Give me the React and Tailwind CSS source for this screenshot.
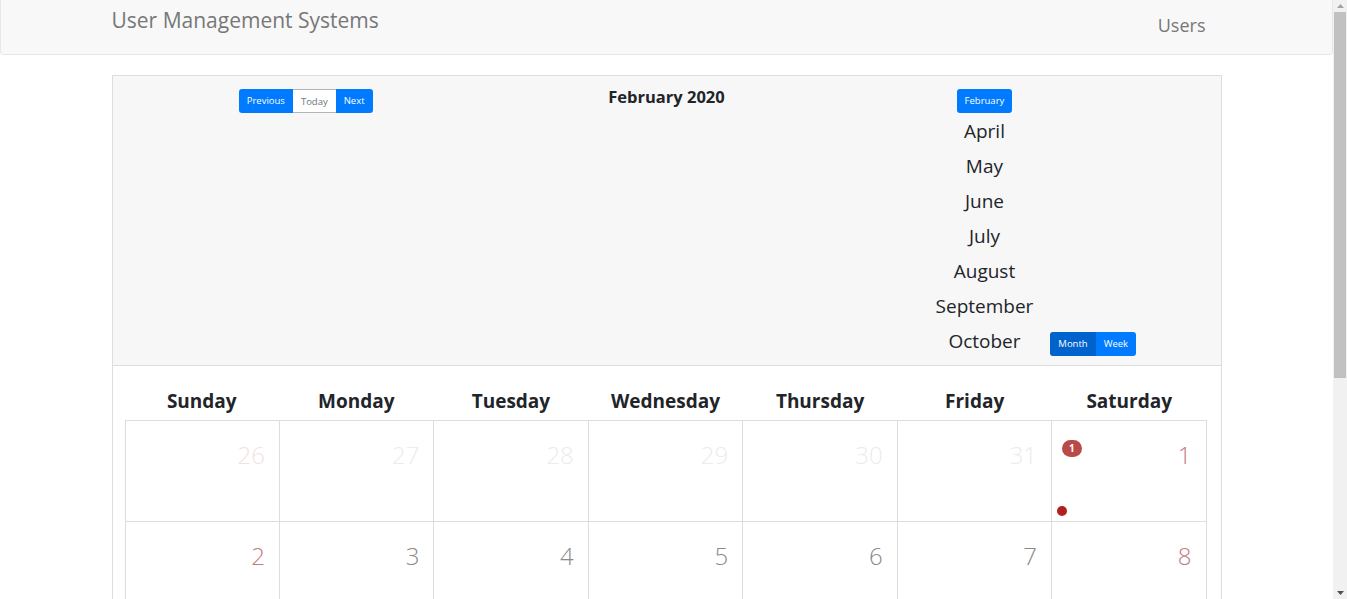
import React from "react";

const days = ["Sunday", "Monday", "Tuesday", "Wednesday", "Thursday", "Friday", "Saturday"];
const months = ["April", "May", "June", "July", "August", "September", "October"];

// build Feb 2020 grid (starts Sun Jan 26)
const weeks = [];
for (let w = 0; w < 5; w++) {
    const row = [];
    for (let d = 0; d < 7; d++) {
        const idx = w * 7 + d;
        if (idx < 6) row.push({ n: 26 + idx, other: true, dow: d });
        else row.push({ n: idx - 5, other: false, dow: d });
    }
    weeks.push(row);
}

const numColor = (c) => {
    if (c.other) return c.dow === 0 ? "text-[#f1e3e3]" : "text-[#ececec]";
    if (c.dow === 0 || c.dow === 6) return "text-[#c27c80]";
    return "text-[#8a8a8a]";
};

const App = () => {
    return (
        <div className="flex h-[599px] overflow-hidden bg-white font-['Open_Sans','Noto_Sans',sans-serif] text-[#212529]">
            <div className="w-[1333px] shrink-0">
                {/* navbar */}
                <div className="h-[55px] bg-[#f8f8f8] border border-t-0 border-[#e7e7e7] rounded-b-[4px]">
                    <div className="w-[1110px] mx-auto flex justify-between">
                        <div className="pt-[6px] text-[21px] leading-[28px] text-[#777]">User Management Systems</div>
                        <div className="pt-[12px] pr-[16px] text-[18px] leading-[26px] text-[#777]">Users</div>
                    </div>
                </div>

                {/* calendar card */}
                <div className="w-[1110px] mx-auto mt-[20px] border border-[#ddd]">
                    <div className="bg-[#f7f7f7] border-b border-[#ddd] grid grid-cols-3 pt-[13px] pb-[6px]">
                        <div className="flex justify-center pl-[17px] items-start">
                            <div className="flex text-[9.5px] leading-[24px] rounded-[3px] overflow-hidden">
                                <button className="bg-[#007bff] text-white px-[8px] h-[24px]">Previous</button>
                                <button className="bg-white text-[#6c757d] px-[8px] h-[24px] border-y border-[#adb5bd]">Today</button>
                                <button className="bg-[#007bff] text-white px-[8px] h-[24px]">Next</button>
                            </div>
                        </div>
                        <div className="flex justify-center">
                            <div className="text-[16.5px] font-bold leading-[18px] -mt-[1px]">February 2020</div>
                        </div>
                        <div className="flex justify-center items-end gap-[17px]">
                            <div className="flex flex-col items-center">
                                <button className="bg-[#007bff] text-white text-[9.5px] h-[24px] px-[8px] rounded-[3px]">February</button>
                                <div className="pt-[1px]">
                                    {months.map((m) => (
                                        <div key={m} className="text-[19px] leading-[35px] text-center">
                                            {m}
                                        </div>
                                    ))}
                                </div>
                            </div>
                            <div className="flex text-[9.5px] rounded-[3px] overflow-hidden mb-[3px]">
                                <button className="bg-[#0062cc] text-white px-[8px] h-[24px]">Month</button>
                                <button className="bg-[#007bff] text-white px-[8px] h-[24px]">Week</button>
                            </div>
                        </div>
                    </div>

                    <div className="bg-white pl-[12px] pr-[14px] pt-[20px]">
                        <div className="grid grid-cols-7 pb-[4px]">
                            {days.map((d) => (
                                <div key={d} className="text-center text-[19px] font-bold leading-[30px]">
                                    {d}
                                </div>
                            ))}
                        </div>
                        <div className="border-t border-l border-[#ddd]">
                            {weeks.map((row, i) => (
                                <div key={i} className="grid grid-cols-7">
                                    {row.map((c, j) => (
                                        <div key={j} className="relative h-[101px] border-r border-b border-[#ddd]">
                                            <div className={`text-right pr-[14px] pt-[19px] text-[24px] font-light leading-[30px] ${numColor(c)}`}>
                                                {c.n}
                                            </div>
                                            {i === 0 && j === 6 && (
                                                <>
                                                    <span className="absolute left-[10px] top-[19px] bg-[#b94a48] text-white text-[10px] font-bold leading-[17px] px-[7px] rounded-full">
                                                        1
                                                    </span>
                                                    <span className="absolute left-[5px] top-[85px] w-[10px] h-[10px] rounded-full bg-[#b21f1f]" />
                                                </>
                                            )}
                                        </div>
                                    ))}
                                </div>
                            ))}
                        </div>
                    </div>
                </div>
            </div>

            {/* scrollbar */}
            <div className="w-[14px] shrink-0 bg-[#f1f1f1] flex flex-col">
                <div className="h-[12px] flex items-center justify-center">
                    <svg width="7" height="4" viewBox="0 0 7 4">
                        <path d="M0 4 L3.5 0 L7 4 Z" fill="#a3a3a3" />
                    </svg>
                </div>
                <div className="h-[366px] mx-[1px] bg-[#c1c1c1]" />
                <div className="flex-1" />
                <div className="h-[12px] flex items-center justify-center">
                    <svg width="7" height="4" viewBox="0 0 7 4">
                        <path d="M0 0 L3.5 4 L7 0 Z" fill="#505050" />
                    </svg>
                </div>
            </div>
        </div>
    );
};

export default App;
